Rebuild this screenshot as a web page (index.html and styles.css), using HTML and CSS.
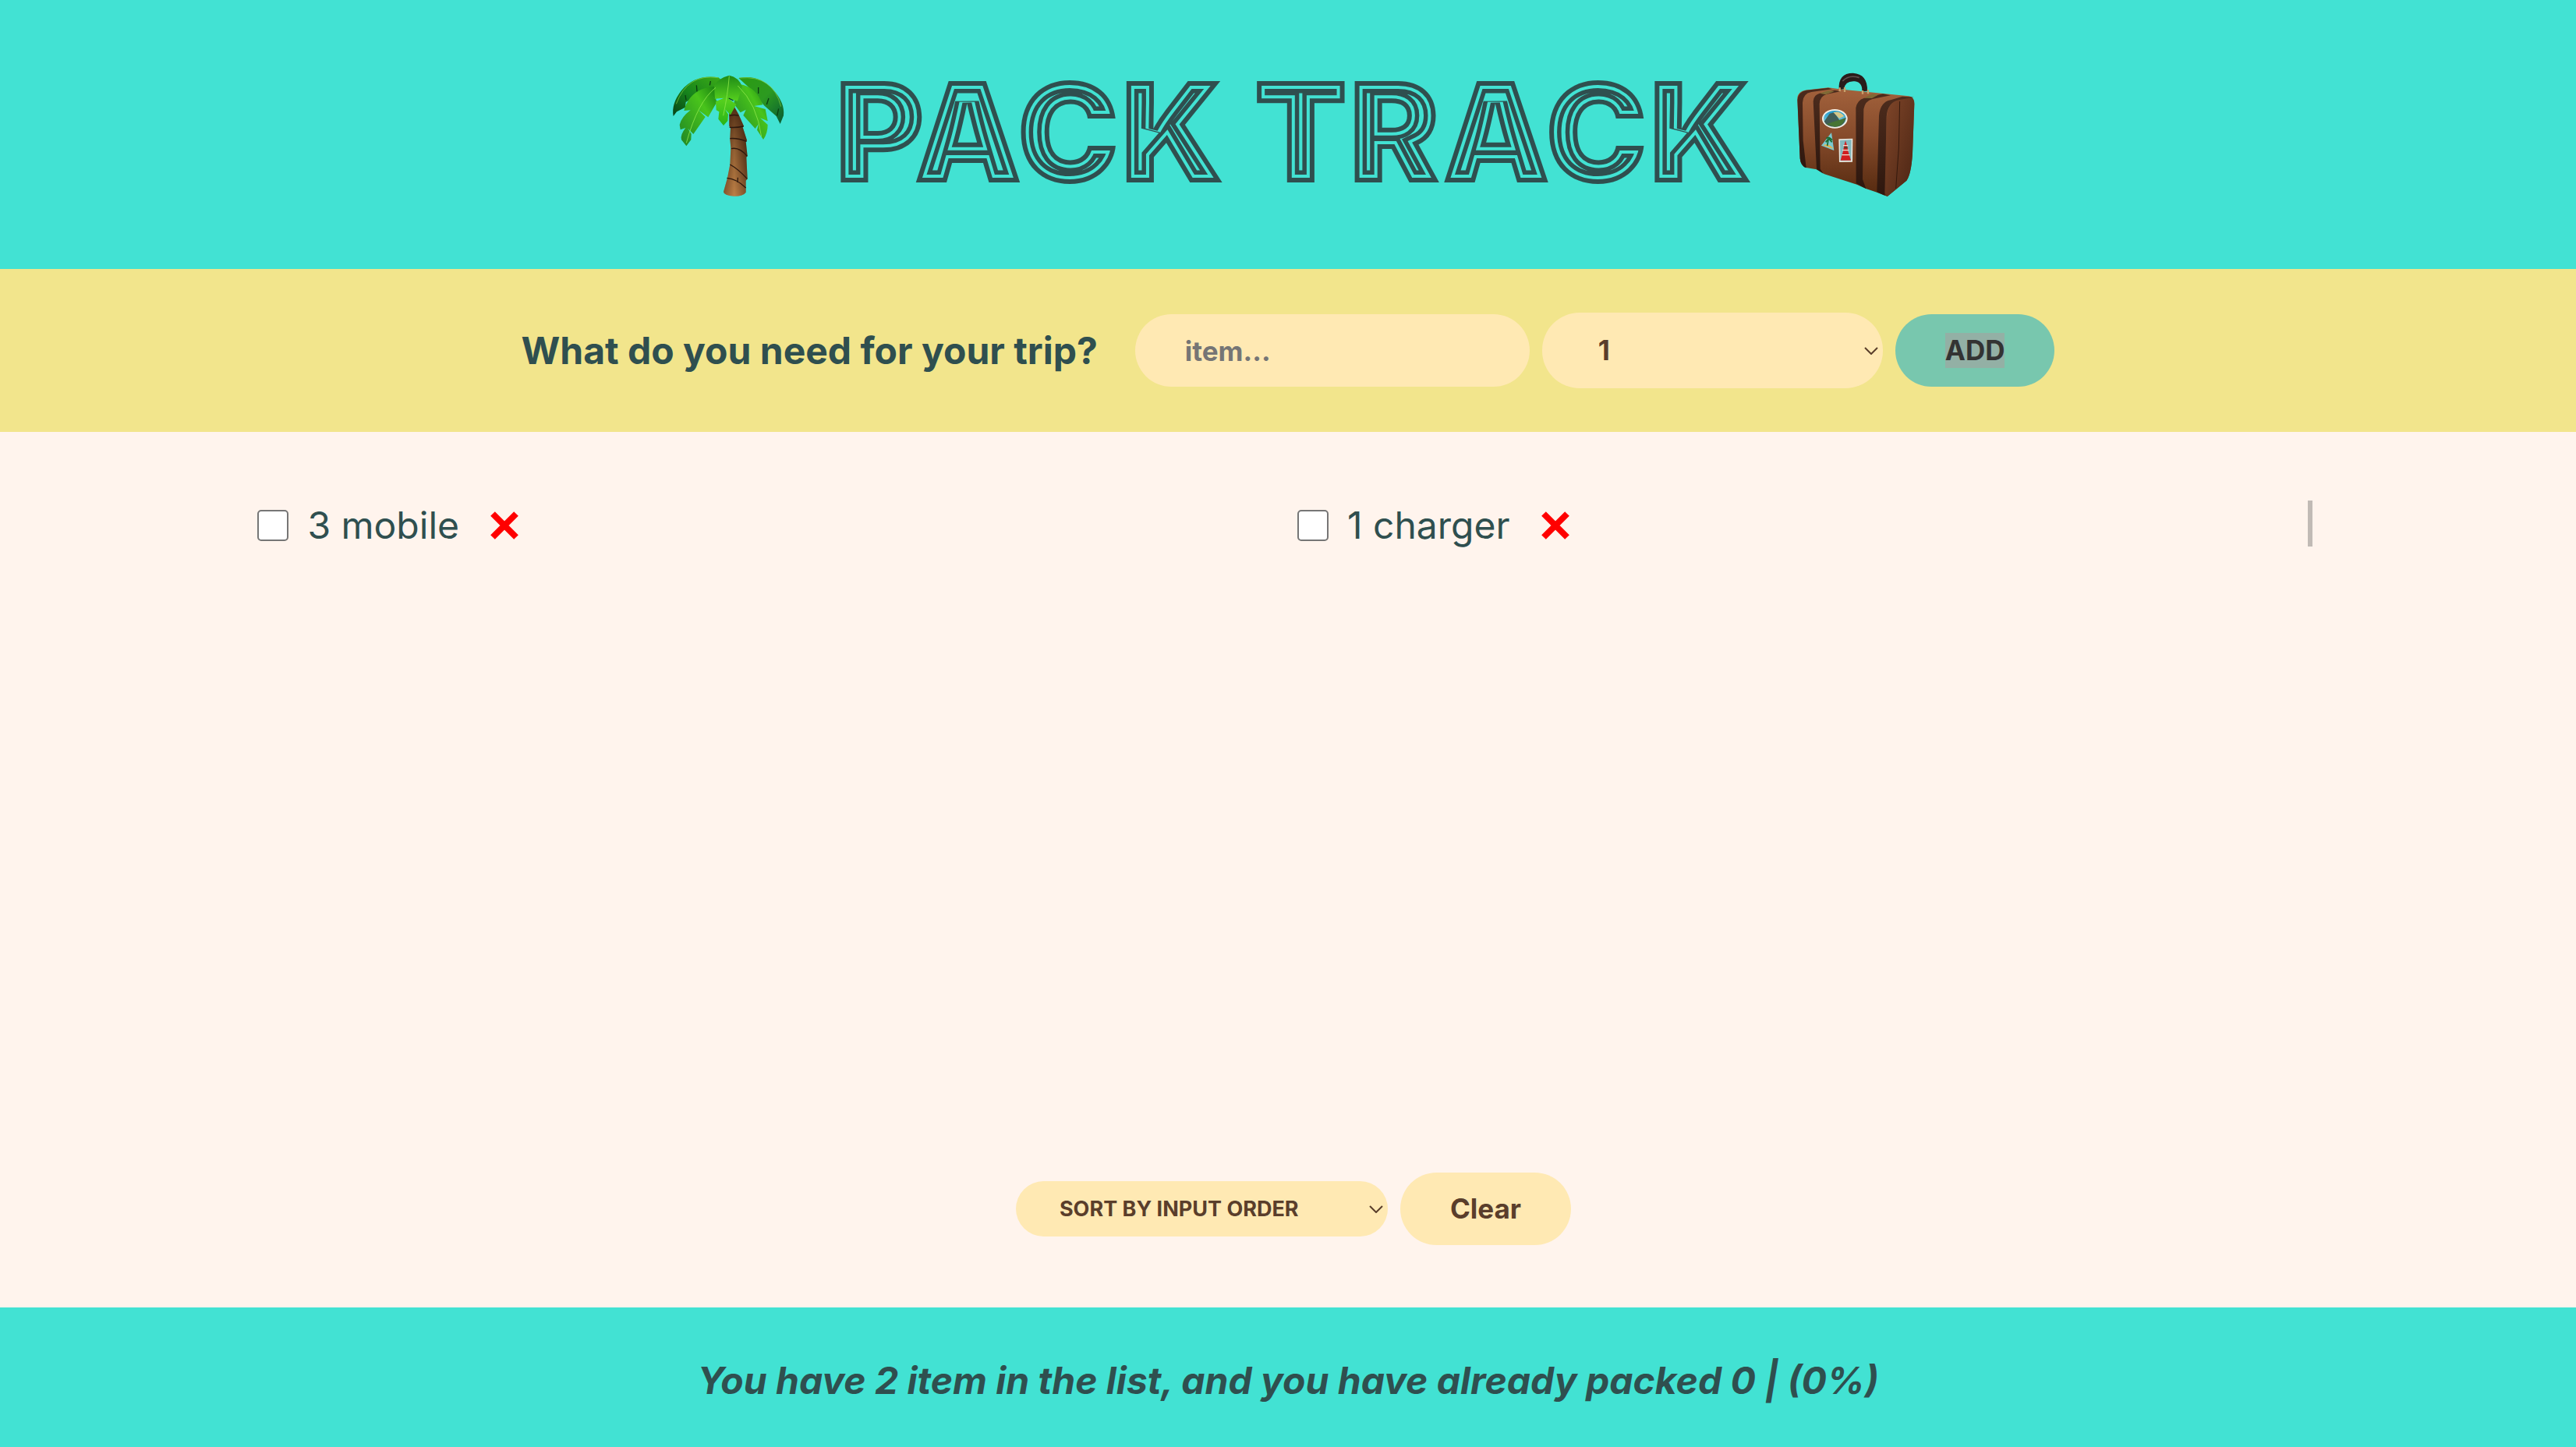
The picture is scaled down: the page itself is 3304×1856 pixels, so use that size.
FILE: index.html
```html
<!DOCTYPE html>
<html lang="en">
<head>
<meta charset="utf-8">
<meta name="viewport" content="width=device-width, initial-scale=1">
<title>Pack Track</title>
<link rel="stylesheet" href="styles.css">
</head>
<body>
<div class="app">
  <header class="header">
    <svg class="emblem" viewBox="0 0 540 540" aria-hidden="true">
      <defs>
        <linearGradient id="trunk" x1="0" x2="1"><stop offset="0" stop-color="#68401f"/><stop offset=".45" stop-color="#b47a42"/><stop offset="1" stop-color="#573318"/></linearGradient>
        <linearGradient id="trunkShade" x1="0" y1="0" x2="0" y2="1"><stop offset="0" stop-color="#3a1d0c" stop-opacity=".8"/><stop offset=".5" stop-color="#3a1d0c" stop-opacity=".25"/><stop offset="1" stop-color="#d08c50" stop-opacity=".3"/></linearGradient>
        <linearGradient id="leafL" x1="1" y1="0" x2="0" y2="1"><stop offset="0" stop-color="#3fae16"/><stop offset=".55" stop-color="#17851c"/><stop offset="1" stop-color="#064016"/></linearGradient>
        <linearGradient id="leafR" x1="0" y1="0" x2="1" y2="1"><stop offset="0" stop-color="#2a9a12"/><stop offset=".5" stop-color="#2c9a20"/><stop offset="1" stop-color="#075a34"/></linearGradient>
        <linearGradient id="leafM" x1="1" y1="0" x2="0" y2="1"><stop offset="0" stop-color="#157d10"/><stop offset=".35" stop-color="#49c41b"/><stop offset="1" stop-color="#1f8426"/></linearGradient>
        <linearGradient id="leafC" x1="0" y1="0" x2="0" y2="1"><stop offset="0" stop-color="#1e8a16"/><stop offset=".5" stop-color="#55cf1e"/><stop offset="1" stop-color="#27b417"/></linearGradient>
      </defs>
      <path d="M286 190L306 172L322 200L342 245L338 250L354 300L350 305L356 360L352 365L356 448L350 455L350 500Q340 515 305 515Q265 512 264 498L279 445L289 393L292 330L289 295L291 252L286 245Z" fill="url(#trunk)"/>
      <path d="M286 190L306 172L322 200L342 245L338 250L354 300L350 305L356 360L352 365L356 448L350 455L350 500Q340 515 305 515Q265 512 264 498L279 445L289 393L292 330L289 295L291 252L286 245Z" fill="url(#trunkShade)"/>
      <path d="M287 205Q305 200 322 205M287 250Q315 252 341 246M289 293Q318 290 353 304M294 332Q325 325 355 361M289 393Q320 410 355 448M277 445Q315 448 350 483M319 443L318 462" fill="none" stroke="#2d180d" stroke-width="4"/>
      <path d="M244 58Q155 45 102 108Q62 160 71 207L84 190L117 173L119 153L205 105L270 80Z" fill="url(#leafL)"/>
      <path d="M322 60Q400 44 454 104Q501 155 495 205L482 237L467 207L420 166L365 100Z" fill="url(#leafR)"/>
      <path d="M237 92Q170 95 137 135Q117 160 112 186L137 184Q102 210 95 240L98 259L118 252Q96 280 102 298L121 322L139 298L140 275L127 254L148 276L194 210L168 184L205 211L240 150L216 126L235 145Z" fill="url(#leafM)"/>
      <path d="M315 84Q370 85 400 132L415 163L382 168L425 180L434 226L405 214L434 240Q434 274 417 297L393 260L398 238L386 255L340 204L350 182L329 193L304 160Z" fill="url(#leafM)"/>
      <path d="M286 50Q242 61 228 91L231 140L265 137L234 151L236 184L247 190L244 218L264 243L280 225L282 200L270 181L291 202L313 162L283 139L318 149L336 93Q322 57 286 50Z" fill="url(#leafC)"/>
      <path d="M286 52Q281 120 263 205M234 97Q165 150 121 310M319 90Q393 160 410 286" fill="none" stroke="#8fe84a" stroke-width="3" opacity=".8"/>
      <path d="M243 59Q125 42 82 160M326 60Q455 48 485 170" fill="none" stroke="#83cc45" stroke-width="3" opacity=".7"/>
      <path d="M214 72L211 88M160 88L162 112M117 126L120 145M398 96V120M438 138L430 162M476 178L470 205M284 138L302 147" fill="none" stroke="#09400f" stroke-width="4"/>
    </svg>
    <h1 class="title">
      <svg class="title-art" viewBox="0 0 1162 180">
        <defs>
          <clipPath id="titleClip"><use href="#titleText"/></clipPath>
        </defs>
        <g clip-path="url(#titleClip)">
          <text id="titleText" x="-4" y="154">PACK TRACK</text>
          <use class="line line-3" href="#titleText"/>
          <use class="line line-2" href="#titleText"/>
          <use class="line line-1" href="#titleText"/>
        </g>
      </svg>
    </h1>
    <svg class="emblem" viewBox="0 0 540 540" aria-hidden="true">
      <defs>
        <linearGradient id="hide" x1="0" y1="0" x2="0" y2="1"><stop offset="0" stop-color="#a3623c"/><stop offset=".45" stop-color="#864b2b"/><stop offset="1" stop-color="#54290f"/></linearGradient>
        <linearGradient id="side" x1="0" y1="0" x2="1" y2="1"><stop offset="0" stop-color="#81472a"/><stop offset="1" stop-color="#4a2413"/></linearGradient>
        <linearGradient id="strap" x1="0" y1="0" x2="0" y2="1"><stop offset="0" stop-color="#4d2c1d"/><stop offset="1" stop-color="#2e170e"/></linearGradient>
        <linearGradient id="sky" x1="0" y1="0" x2="0" y2="1"><stop offset="0" stop-color="#1698cf"/><stop offset="1" stop-color="#a6e0df"/></linearGradient>
      </defs>
      <path d="M46 135Q50 112 75 107L165 97L220 104L400 122L475 130Q497 134 496 160L489 350Q484 430 466 455L392 516L352 500L310 486L275 470L150 430L120 412L75 404Q58 395 56 370Z" fill="url(#hide)"/>
      <path d="M390 210Q395 155 430 143L480 132Q496 136 496 160L489 350Q484 430 466 455L392 516L380 500Z" fill="url(#side)"/>
      <path d="M440 150L436 330L425 485" fill="none" stroke="#35190d" stroke-width="3"/>
      <path d="M46 145Q50 112 80 107L165 98L180 103L100 114Q67 120 66 155L68 300L80 406Q59 399 56 370Z" fill="url(#strap)"/>
      <path d="M107 150Q108 125 132 119L190 107L212 112L160 122Q132 130 131 160L134 410L146 428L120 412Z" fill="url(#strap)"/>
      <path d="M271 175Q276 145 303 137L375 121L405 127L335 141Q306 149 301 180L297 450L310 486L272 466Z" fill="url(#strap)"/>
      <path d="M360 205Q365 152 405 145L450 131L494 134L435 145Q393 155 389 210L382 512L352 499Z" fill="url(#strap)"/>
      <path d="M132 119L165 108L188 112L155 124ZM302 137L335 121L357 125L333 138Z" fill="#806a35"/>
      <path d="M206 105Q202 41 260 41Q317 45 315 110L295 112Q297 77 267 73Q230 70 225 103Z" fill="#291c1b"/>
      <path d="M220 72Q244 46 284 59" fill="none" stroke="#625150" stroke-width="5"/>
      <path d="M209 97V112M228 96V114M297 108V122M318 105V121" stroke="#c8a16c" stroke-width="7"/>
      <ellipse cx="190" cy="217" rx="49" ry="37" fill="#f1eee4"/>
      <ellipse cx="190" cy="217" rx="43" ry="31" fill="url(#sky)"/>
      <path d="M149 227L170 197L188 192L208 223L233 212Q228 247 190 248Q158 247 149 227Z" fill="#405d57"/>
      <path d="M184 192Q211 185 226 207L207 216Z" fill="#d5c789"/>
      <path d="M158 238L198 224L231 215Q222 245 190 248Z" fill="#467434"/>
      <path d="M177 270L187 339L138 320Z" fill="#7bc9d0"/>
      <path d="M145 319Q166 308 185 333Z" fill="#e7b34d"/>
      <path d="M157 293Q168 283 180 299M166 292L161 321M167 293L155 307M167 293L179 307" stroke="#176b31" stroke-width="5" fill="none"/>
      <path d="M205 295L259 293L258 383L207 384Z" fill="#e7e5dd"/>
      <path d="M210 300L254 298L253 378L211 379Z" fill="#83b8bd"/>
      <path d="M231 301L237 319L241 341L252 377H212L222 341L226 319Z" fill="#d11f20"/>
      <path d="M222 320H241M219 338H244M217 356H248" stroke="#f4dfce" stroke-width="4"/>
      <path d="M226 328H239" stroke="#442" stroke-width="5"/>
    </svg>
  </header>

  <form class="add-form">
    <label class="question" for="item">What do you need for your trip?</label>
    <div class="fields">
      <input class="control item-input" id="item" type="text" placeholder="item...">
      <div class="select-wrap quantity-wrap">
        <select class="control quantity" aria-label="Quantity"><option>1</option><option>2</option><option>3</option></select>
        <svg class="chevron" viewBox="0 0 18 10" aria-hidden="true"><path d="M1 1L9 9L17 1"/></svg>
      </div>
      <button class="control add" type="button"><span class="selected">ADD</span></button>
    </div>
  </form>

  <main class="main">
    <div class="scroller">
      <ul class="items">
        <li class="entry">
          <input class="tick" type="checkbox" id="mobile">
          <label for="mobile">3 mobile</label>
          <button class="remove" type="button" aria-label="Remove mobile"><svg viewBox="0 0 36 36"><path d="M3 3L33 33M33 3L3 33"/></svg></button>
        </li>
        <li class="entry">
          <input class="tick" type="checkbox" id="charger">
          <label for="charger">1 charger</label>
          <button class="remove" type="button" aria-label="Remove charger"><svg viewBox="0 0 36 36"><path d="M3 3L33 33M33 3L3 33"/></svg></button>
        </li>
      </ul>
      <div class="thumb"></div>
    </div>
    <div class="actions">
      <div class="select-wrap sort-wrap">
        <select class="control sort" aria-label="Sort"><option>SORT BY INPUT ORDER</option><option>SORT BY DESCRIPTION</option><option>SORT BY PACKED STATUS</option></select>
        <svg class="chevron" viewBox="0 0 18 10" aria-hidden="true"><path d="M1 1L9 9L17 1"/></svg>
      </div>
      <button class="control clear" type="button">Clear</button>
    </div>
  </main>

  <footer class="footer">You have 2 item in the list, and you have already packed 0 | (0%)</footer>
</div>
</body>
</html>
```
FILE: styles.css
```css
:root {
  --sea: #42e2d3;
  --ink: #2f4f4f;
  --cream: #ffe9b3;
  --brown: #5a3e2b;
}

* {
  box-sizing: border-box;
}

body {
  margin: 0;
  color: var(--ink);
  font-family: Inter, sans-serif;
  font-size: 48px;
  line-height: 60px;
}

.app {
  display: flex;
  flex-direction: column;
  min-height: 100vh;
}

.header {
  display: flex;
  align-items: center;
  justify-content: center;
  gap: 54px;
  padding: 80px 24px 85px 30px;
  background: var(--sea);
}

.emblem {
  flex: none;
  width: 180px;
  height: 180px;
}

.title {
  width: 1162px;
  margin: 0;
}

.title-art {
  display: block;
  width: 100%;
  overflow: visible;
  font-family: Inter, sans-serif;
  font-size: 178px;
  font-weight: 900;
  fill: var(--sea);
}

.line {
  fill: none;
  stroke-linejoin: miter;
  stroke-miterlimit: 2;
}

.line-3 {
  stroke: var(--ink);
  stroke-width: 31px;
}

.line-2 {
  stroke: var(--sea);
  stroke-width: 20px;
}

.line-1 {
  stroke: var(--ink);
  stroke-width: 12px;
}

.add-form {
  display: flex;
  flex-wrap: wrap;
  align-items: center;
  justify-content: center;
  gap: 48px;
  padding: 56px 24px;
  background: #f2e58c;
}

.question {
  font-weight: 700;
}

.fields {
  display: flex;
  align-items: center;
  gap: 16px;
}

.control {
  height: 93px;
  padding: 0 64px;
  border: 0;
  border-radius: 48px;
  background: var(--cream);
  color: var(--brown);
  font-family: inherit;
  font-size: 35px;
  font-weight: 700;
  line-height: 45px;
}

.item-input {
  width: 506px;
}

.item-input::placeholder {
  color: #757575;
}

.select-wrap {
  position: relative;
}

.select-wrap .control {
  width: 100%;
  appearance: none;
}

.quantity-wrap {
  width: 437px;
}

.select-wrap .quantity {
  height: 97px;
  padding: 0 72px;
}

.chevron {
  position: absolute;
  top: 50%;
  right: 6px;
  width: 18px;
  height: 10px;
  margin-top: -5px;
  fill: none;
  stroke: var(--brown);
  stroke-width: 2px;
  pointer-events: none;
}

.select-wrap,
.select-wrap .control {
  display: block;
}

.add {
  background: #78c7ae;
  color: #333;
}

.selected {
  display: block;
  background: #93b0a5;
}

.main {
  display: flex;
  flex: 1;
  flex-direction: column;
  justify-content: space-between;
  padding: 88px 10% 80px;
  background: #fff4ed;
}

.scroller {
  display: flex;
  padding-right: 8px;
}

.items {
  display: grid;
  flex: 1;
  grid-template-columns: 1fr 1fr;
  gap: 38px;
  margin: 0;
  padding: 0;
  list-style: none;
}

.entry {
  display: flex;
  align-items: center;
  height: 64px;
}

.tick {
  appearance: none;
  width: 40px;
  height: 40px;
  margin: 0 24px 0 0;
  border: 2px solid #767676;
  border-radius: 5px;
  background: #fff;
}

.remove {
  width: 36px;
  height: 36px;
  margin-left: 40px;
  padding: 0;
  border: 0;
  background: none;
}

.remove svg {
  display: block;
  fill: none;
  stroke: #f00;
  stroke-width: 8px;
}

.thumb {
  width: 6px;
  height: 59px;
  background: #c1bab5;
}

.actions {
  display: flex;
  align-items: center;
  justify-content: center;
  gap: 16px;
  padding-left: 14px;
}

.sort-wrap {
  width: 477px;
}

.select-wrap .sort {
  height: 71px;
  padding: 0 56px;
  font-size: 27px;
  line-height: 35px;
}

.footer {
  padding: 64px 24px 55px;
  background: var(--sea);
  font-style: italic;
  font-weight: 700;
  text-align: center;
}
```
